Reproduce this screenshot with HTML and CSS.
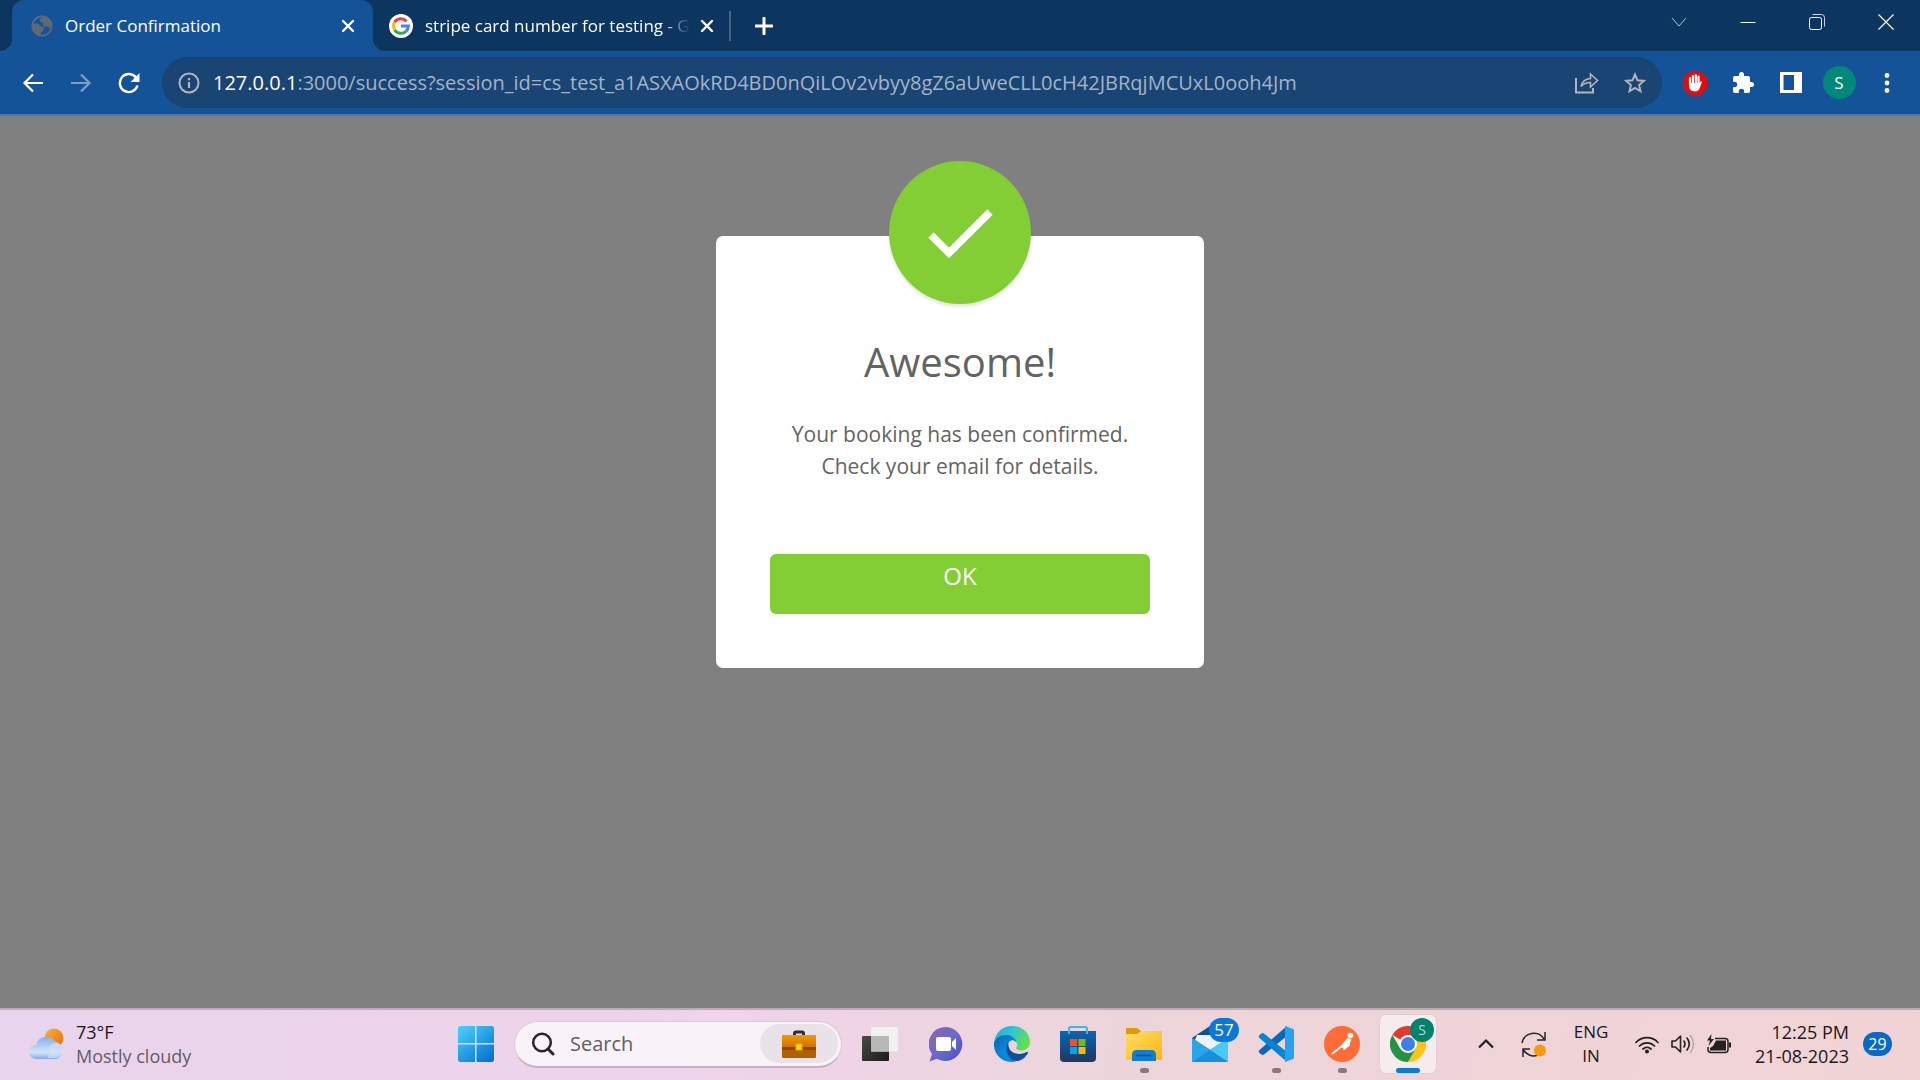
FILE: index.html
```html
<!DOCTYPE html>
<html lang="en">
<head>
<meta charset="utf-8">
<title>Order Confirmation</title>
<link rel="stylesheet" href="styles.css">
</head>
<body>
<div class="desktop">
  <header class="browser">
    <div class="tab-bar">
      <nav class="tabs" aria-label="Tabs">
        <div class="tab tab-active">
          <svg class="favicon" width="22" height="22" viewBox="0 0 22 22"><circle cx="11" cy="11" r="9.700" fill="none" stroke="#606972" stroke-width="1.800"/><path d="M2 8.500h4.500q1.500 0 2 1.500l.8 1.500h2.200q1.500.5 1.500 2v1.500q-2 .5-2.500 2L9 20.500C4 19 .5 15 2 8.500zM12 1.500L9.500 3.500Q8 5 9 6.500l2 1q1.500.5 1 2t1.500 2.200l3-.5 1.500 1.800 2.500-.5C22 7 18 2 12 1.500z" fill="#606972"/></svg>
          <button class="tab-title">Order Confirmation</button>
          <button class="tab-close" aria-label="Close tab"><svg width="14" height="14" viewBox="0 0 14 14"><path d="M2 2l10 10M12 2L2 12" stroke="#fff" stroke-width="2.400" stroke-linecap="round"/></svg></button>
        </div>
        <div class="tab tab-second">
          <svg class="favicon" width="24" height="24" viewBox="0 0 24 24"><circle cx="12" cy="12" r="12" fill="#fff"/><g fill="none" stroke-width="3"><path d="M5.600 8.300A7.400 7.400 0 0 1 17.500 7.200" stroke="#ea4335"/><path d="M5.600 15.700a7.400 7.400 0 0 1 0-7.400" stroke="#fbbc05"/><path d="M17 17.400A7.400 7.400 0 0 1 5.600 15.700" stroke="#34a853"/><path d="M12 12h7.400a7.400 7.400 0 0 1-2.400 5.400" stroke="#4285f4"/></g></svg>
          <button class="tab-title tab-title-fade">stripe card number for testing - G</button>
          <button class="tab-close" aria-label="Close tab"><svg width="14" height="14" viewBox="0 0 14 14"><path d="M2 2l10 10M12 2L2 12" stroke="#fff" stroke-width="2.400" stroke-linecap="round"/></svg></button>
        </div>
        <button class="new-tab" aria-label="New tab"><svg width="18" height="18" viewBox="0 0 18 18"><path d="M9 1v16M1 9h16" stroke="#fff" stroke-width="3" stroke-linecap="round"/></svg></button>
      </nav>
      <div class="window-controls">
        <button aria-label="Search tabs"><svg width="16" height="16" viewBox="0 0 16 16"><path d="M1 4l7 8 7-8" fill="none" stroke="#b6c2cf"/></svg></button>
        <button aria-label="Minimize"><svg width="16" height="16" viewBox="0 0 16 16"><path d="M.5 8.500h15" stroke="#fff"/></svg></button>
        <button aria-label="Restore"><svg width="16" height="16" viewBox="0 0 16 16"><rect x=".5" y="3.500" width="12" height="12" rx="2" fill="none" stroke="#fff"/><path d="M3.500.500h9q3 0 3 3v9" fill="none" stroke="#c9d2dc"/></svg></button>
        <button aria-label="Close window"><svg width="16" height="16" viewBox="0 0 16 16"><path d="M.5.500l15 15M15.500.500l-15 15" stroke="#fff" stroke-width="1.200"/></svg></button>
      </div>
    </div>
    <div class="toolbar">
      <div class="tool-group">
        <button aria-label="Back"><svg width="22" height="22" viewBox="0 0 22 22"><path d="M21 11H3M11 2.500L2.500 11l8.500 8.500" fill="none" stroke="#fff" stroke-width="2.200"/></svg></button>
        <button aria-label="Forward" disabled><svg width="22" height="22" viewBox="0 0 22 22"><path d="M1 11h18M11 2.500l8.500 8.500-8.500 8.500" fill="none" stroke="#7d9fc8" stroke-width="2.200"/></svg></button>
        <button aria-label="Reload"><svg width="22" height="22" viewBox="0 0 22 22"><path d="M18.300 6A9 9 0 1 0 19.500 13.500" fill="none" stroke="#fff" stroke-width="2.400"/><path d="M21.500 1v9h-9z" fill="#fff"/></svg></button>
      </div>
      <form class="omnibox">
        <svg width="22" height="22" viewBox="0 0 22 22"><circle cx="11" cy="11" r="9.500" fill="none" stroke="#b3b5b9" stroke-width="2"/><path d="M11 10v6M11 6v2.200" stroke="#b3b5b9" stroke-width="2.200"/></svg>
        <div class="address">
          <label for="address">127.0.0.1</label>
          <input id="address" type="text" value=":3000/success?session_id=cs_test_a1ASXAOkRD4BD0nQiLOv2vbyy8gZ6aUweCLL0cH42JBRqjMCUxL0ooh4Jm">
        </div>
        <div class="tool-group">
          <button type="button" aria-label="Share"><svg width="24" height="22" viewBox="0 0 24 22"><path d="M1 6v14.500h17V16" fill="none" stroke="#b3b5b9" stroke-width="2"/><path d="M6 14.500C7 9.500 10 7 15.500 6.500V2l7 6.500-7 6.500v-4.500c-4.500 0-7 1-9.500 4z" fill="none" stroke="#b3b5b9" stroke-width="1.600"/></svg></button>
          <button type="button" aria-label="Bookmark this tab"><svg width="22" height="22" viewBox="0 0 22 22"><path d="M11 2.500l2.500 5.800 6.300.6-4.700 4.200 1.400 6.200-5.500-3.300-5.500 3.300 1.400-6.200-4.700-4.200 6.300-.6z" fill="none" stroke="#b3b5b9" stroke-width="2"/></svg></button>
        </div>
      </form>
      <div class="tool-group">
        <button aria-label="Ad blocker"><svg width="24" height="24" viewBox="0 0 24 24"><path d="M7 0h10l7 7v10l-7 7H7l-7-7V7z" fill="#e60b0b"/><path d="M7 7v7M9.900 5v8M12.800 4v9M15.500 5.500V14" stroke="#fff" stroke-width="2.200" stroke-linecap="round"/><path d="M6 12h10.600l1.200-2q1.600-.3 1 1.500l-2.300 6q-1.200 3-4.500 3Q6 20.500 6 14z" fill="#fff"/></svg></button>
        <button aria-label="Extensions"><svg width="24" height="24" viewBox="0 0 24 24"><path d="M20.500 11H19V7a2 2 0 0 0-2-2h-4V3.500a2.500 2.500 0 0 0-5 0V5H4a2 2 0 0 0-2 2v3.800h1.500a2.700 2.700 0 0 1 0 5.400H2V20a2 2 0 0 0 2 2h3.800v-1.500a2.700 2.700 0 0 1 5.400 0V22H17a2 2 0 0 0 2-2v-4h1.500a2.500 2.500 0 0 0 0-5z" fill="#fff"/></svg></button>
        <button aria-label="Side panel"><svg width="22" height="21" viewBox="0 0 22 21"><path fill-rule="evenodd" d="M0 0h22v21H0zM3.500 3v15H14V3z" fill="#fff"/></svg></button>
        <button aria-label="Profile"><span class="avatar">S</span></button>
        <button aria-label="Menu"><svg width="6" height="20" viewBox="0 0 6 20"><g fill="#fff"><circle cx="3" cy="2.500" r="2.400"/><circle cx="3" cy="10" r="2.400"/><circle cx="3" cy="17.500" r="2.400"/></g></svg></button>
      </div>
    </div>
  </header>

  <main class="page">
    <section class="modal" role="dialog" aria-labelledby="modal-title">
      <div class="modal-icon"><svg width="66" height="50" viewBox="0 0 66 50"><path d="M4 27L22 45 63 4" fill="none" stroke="#fff" stroke-width="7.500"/></svg></div>
      <h1 id="modal-title">Awesome!</h1>
      <p>Your booking has been confirmed. Check your email for details.</p>
      <button class="ok">OK</button>
    </section>
  </main>

  <footer class="taskbar">
    <button class="weather">
      <svg width="38" height="32" viewBox="0 0 38 32">
        <defs><linearGradient id="sun" x2="1" y2="1"><stop stop-color="#f2b53a"/><stop offset="1" stop-color="#f06a0a"/></linearGradient><linearGradient id="cloud" x2="0" y2="1"><stop stop-color="#86aeee"/><stop offset=".7" stop-color="#d3e4f8"/><stop offset="1" stop-color="#83a9ee"/></linearGradient></defs>
        <circle cx="26" cy="10" r="9.500" fill="url(#sun)"/><path d="M8 31a7 7 0 0 1 0-14 10.500 10.500 0 0 1 19-3.500 9 9 0 0 1 1.500 17.500z" fill="url(#cloud)"/><path d="M21 19q3-5 9-4a8 8 0 0 1-2 15h-8z" fill="#cfe0f8" opacity=".7"/>
      </svg>
      <span class="lines"><span>73°F</span><span class="muted">Mostly cloudy</span></span>
    </button>

    <nav class="apps" aria-label="Taskbar">
      <button class="app" aria-label="Start"><svg width="36" height="36" viewBox="0 0 36 36"><defs><linearGradient id="win" gradientUnits="userSpaceOnUse" x1="0" y1="0" x2="30" y2="36"><stop stop-color="#4ed3fb"/><stop offset="1" stop-color="#0573d3"/></linearGradient></defs><path d="M1.500 0H17v17H0V1.500zM18.500 0h16L36 1.500V17H18.500zM0 18.500h17V36H1.500L0 34.500zM18.500 18.500H36v16L34.500 36h-16z" fill="url(#win)"/></svg></button>
      <div class="search">
        <svg width="24" height="24" viewBox="0 0 24 24"><circle cx="11" cy="10.500" r="8.800" fill="none" stroke="#272727" stroke-width="2.500"/><path d="M17 17l5 5" stroke="#272727" stroke-width="3" stroke-linecap="round"/></svg>
        <input type="text" placeholder="Search" aria-label="Search">
        <button class="highlight" aria-label="Search highlights"><svg width="34" height="28" viewBox="0 0 34 28"><defs><linearGradient id="case" x2="0" y2="1"><stop stop-color="#f39a05"/><stop offset="1" stop-color="#cf7200"/></linearGradient></defs><path d="M12.500 5V3.500Q12.500 2 14 2h6q1.500 0 1.500 1.500V5" fill="none" stroke="#2c2f37" stroke-width="3"/><rect y="5" width="34" height="23" rx="1.500" fill="#b06000"/><path d="M0 6q0-1 1-1h32q1 0 1 1v11H0z" fill="url(#case)"/><rect y="17" width="34" height="3" fill="#8b4700"/><rect x="14" y="14" width="6" height="6" fill="#ffd321" stroke="#e5ac00"/></svg></button>
      </div>
      <button class="app" aria-label="Task view"><svg width="36" height="34" viewBox="0 0 36 34"><defs><linearGradient id="dark" x2="1" y2="1"><stop stop-color="#4a4a48"/><stop offset="1" stop-color="#1b1b1b"/></linearGradient></defs><rect y="9" width="27" height="25" rx="1" fill="url(#dark)"/><rect x="9" width="27" height="24.500" rx="1" fill="#f1f1f1"/><path d="M9 9h18v15.500H9z" fill="#b8b8b7"/></svg></button>
      <button class="app" aria-label="Chat"><svg width="34" height="35" viewBox="0 0 34 35"><defs><linearGradient id="chat" x1="0" y1="0" x2="1" y2="1"><stop stop-color="#8c65a8"/><stop offset=".5" stop-color="#6a6bc9"/><stop offset="1" stop-color="#4a4fc0"/></linearGradient></defs><path d="M17 0a17 17 0 1 1-9 31.800L.500 34.500 3 27A17 17 0 0 1 17 0z" fill="url(#chat)"/><rect x="7" y="10" width="15" height="14" rx="2" fill="#fff"/><path d="M23 15l4-4v12l-4-4z" fill="#fff"/></svg></button>
      <button class="app" aria-label="Edge"><svg width="36" height="36" viewBox="0 0 36 36"><defs><linearGradient id="edge1" x2="1" y2=".4"><stop stop-color="#1fa6dc"/><stop offset=".5" stop-color="#30c4d6"/><stop offset="1" stop-color="#63df4f"/></linearGradient><linearGradient id="edge2" x2="1" y2="1"><stop stop-color="#0c64ae"/><stop offset=".5" stop-color="#0a85da"/></linearGradient></defs><path d="M0 17C1 7 8 0 18 0c11 0 18 8 18 16 0 6-5 9-10 8.500-3.500-.5-4.500-2-3.500-3.500 2-3 0-7-5-7z" fill="url(#edge1)"/><path d="M0 17C2 11 8 8.500 13 9c6 .5 9.500 4.500 9.500 8-1-3-5-4-7.500-1C10 22 14 34 23 35 10 39-1 29 0 17z" fill="url(#edge2)"/><path d="M14.500 16C9 23 15 36 24 35c5-1 8-4.500 10-8 .5-1-.5-1.500-1.300-1C24 30.500 13 27 14.500 16z" fill="#114f9a"/></svg></button>
      <button class="app" aria-label="Microsoft Store"><svg width="36" height="36" viewBox="0 0 36 36"><defs><linearGradient id="store" x2="0" y2="1"><stop stop-color="#0a66b3"/><stop offset="1" stop-color="#20375f"/></linearGradient></defs><path d="M0 5h36v27q0 4-4 4H4q-4 0-4-4z" fill="url(#store)"/><path d="M9 8V3q0-2 2-2h14q2 0 2 2v5" fill="none" stroke="#35b7ef" stroke-width="2"/><path d="M10 13h7v7h-7z" fill="#f25022"/><path d="M18.500 13h7v7h-7z" fill="#7fba00"/><path d="M10 21h7v7h-7z" fill="#00a4ef"/><path d="M18.500 21h7v7h-7z" fill="#ffb900"/></svg></button>
      <button class="app running" aria-label="File Explorer"><svg width="36" height="33" viewBox="0 0 36 33"><defs><linearGradient id="folder" x2="1" y2="1"><stop stop-color="#ffdc6b"/><stop offset="1" stop-color="#fdb70c"/></linearGradient></defs><path d="M0 1q0-1 1-1h10l4 3h20v5H0z" fill="#dd9c04"/><path d="M0 6h11l4-3h20q1 0 1 1v28H0z" fill="url(#folder)"/><path d="M6 33v-6q0-5 5-5h14q5 0 5 5v6z" fill="#0f7cd6"/><path d="M10 27.500h15" stroke="#0a4f96" stroke-width="1.500"/></svg></button>
      <button class="app" aria-label="Mail"><svg width="36" height="36" viewBox="0 0 36 36"><path d="M0 12L18 0l18 12v8H0z" fill="#104f96"/><path d="M5 9h27v12l-14 5L3 14z" fill="#eef3f7"/><path d="M0 12l36 23H0z" fill="#2ba5e8"/><path d="M36 12v23L18 23.500z" fill="#47c9f5"/><path d="M0 36V12l36 24z" fill="#2ba5e8"/><path d="M0 36l18-12 18 12z" fill="#1590df"/></svg><span class="badge">57</span></button>
      <button class="app running" aria-label="Visual Studio Code"><svg width="36" height="36" viewBox="0 0 36 36"><path d="M2 27.500l2 1.200q1 .5 2-.3L29 10V0L1.500 24Q0 26 2 27.500z" fill="#0969b5"/><path d="M2 8.500l2-1.200q1-.5 2 .3L29 26v10L1.500 12Q0 10 2 8.500z" fill="#0785d0"/><path d="M27 0l8 3q1 .5 1 2v26q0 1.500-1 2l-8 3z" fill="#27a2f0"/></svg></button>
      <button class="app running" aria-label="Postman"><svg width="36" height="36" viewBox="0 0 36 36"><circle cx="18" cy="18" r="18" fill="#ff6c37"/><circle cx="26.500" cy="9.500" r="2.800" fill="#fff"/><path d="M23.500 12l4 1.500-3.500 6-4 2.500-4-1z" fill="#fff"/><path d="M18 20l-9.500 7.500M25.500 14l-.5 5-5 4" fill="none" stroke="#fff" stroke-width="1.800" stroke-linecap="round"/></svg></button>
      <button class="app current" aria-label="Google Chrome"><svg width="36" height="36" viewBox="0 0 36 36"><path d="M18 18L2.400 9A18 18 0 0 1 33.600 9z" fill="#e23a2e"/><path d="M18 18V9h15.600A18 18 0 0 1 18 36l7.800-13.500z" fill="#fcc216"/><path d="M10.200 22.500L2.400 9A18 18 0 0 0 18 36l7.800-13.500z" fill="#239345"/><circle cx="18" cy="18" r="9" fill="#fff"/><circle cx="18" cy="18" r="7" fill="#3f7de8"/></svg><span class="badge badge-profile">S</span></button>
    </nav>

    <div class="tray">
      <button aria-label="Show hidden icons"><svg width="18" height="18" viewBox="0 0 18 18"><path d="M2 12.500L9 5.500l7 7" fill="none" stroke="#272222" stroke-width="2.200"/></svg></button>
      <button class="tray-sync" aria-label="Windows Update"><svg width="26" height="26" viewBox="0 0 26 26"><g fill="none" stroke="#2a2424" stroke-width="1.500"><path d="M1 12A12 12 0 0 1 23 8M24 1v8h-8"/><path d="M16 24.500A12 12 0 0 1 2.500 19M2 26v-8h7"/></g><circle cx="19" cy="19.500" r="6" fill="#fb980b"/></svg></button>
      <button class="tray-language lines"><span>ENG</span><span>IN</span></button>
      <button class="tray-status" aria-label="Network, sound and battery">
        <svg width="24" height="20" viewBox="0 0 24 20"><g fill="none" stroke="#222" stroke-width="1.700" stroke-linecap="round"><path d="M1 8.500a15 15 0 0 1 22 0M4.500 12a10.500 10.500 0 0 1 15 0M8 15a6 6 0 0 1 8 0"/></g><circle cx="12" cy="17.500" r="2" fill="#222"/></svg>
        <svg width="24" height="20" viewBox="0 0 24 20"><g fill="none" stroke="#222" stroke-width="1.600" stroke-linejoin="round" stroke-linecap="round"><path d="M1 7h3.500L9.500 2v16l-5-5H1zM13 7q2 3 0 6M16 4q4.500 6 0 12"/><path d="M19.500 1.500q6 8.500 0 17" stroke="#bfa9ab"/></g></svg>
        <svg width="24" height="20" viewBox="0 0 24 20"><path d="M8 4.500h10q3 0 3 3v8q0 3-3 3H4q-3 0-3-3V13" fill="none" stroke="#222" stroke-width="1.500"/><path d="M9 6.500h10v10H3V14l3-2z" fill="#222"/><path d="M22 8.500h2v5h-2zM4.500 0L0 6.500h3L1.500 12 7 5H4z" fill="#222"/></svg>
      </button>
      <button class="tray-clock lines"><span>12:25 PM</span><span>21-08-2023</span></button>
      <button class="tray-count" aria-label="29 notifications"><span>29</span></button>
    </div>
  </footer>
</div>
</body>
</html>
```
FILE: styles.css
```css
* { box-sizing: border-box; }

body {
  margin: 0;
  font-family: "Open Sans", "Noto Sans", sans-serif;
  font-size: 17px;
}

button, input {
  margin: 0;
  padding: 0;
  border: 0;
  background: none;
  color: inherit;
  font: inherit;
}

button {
  display: flex;
  align-items: center;
  justify-content: center;
  position: relative;
}

svg { display: block; flex: none; }

.desktop {
  display: flex;
  flex-direction: column;
  min-height: 100vh;
}

/* Browser window */
.browser {
  background: #155399;
  border-bottom: 2px solid #4a7bb5;
  color: #fff;
}

.tab-bar {
  display: flex;
  justify-content: space-between;
  height: 51px;
  background: #0c3560;
}

.tabs {
  display: flex;
  align-items: center;
  padding-left: 12px;
}

.tab {
  display: flex;
  align-items: center;
  height: 51px;
  position: relative;
}

.tab-active {
  width: 361px;
  padding: 0 18px 0 19px;
  background: #155399;
  border-radius: 12px 12px 0 0;
}

.tab-active::before,
.tab-active::after {
  content: "";
  position: absolute;
  bottom: 0;
  width: 12px;
  height: 12px;
}

.tab-active::before {
  right: 100%;
  background: radial-gradient(circle at 0 0, #0c3560 12px, #155399 12px);
}

.tab-active::after {
  left: 100%;
  background: radial-gradient(circle at 100% 0, #0c3560 12px, #155399 12px);
}

.tab-second {
  width: 358px;
  padding: 0 17px 0 16px;
}

.tab-second::after {
  content: "";
  position: absolute;
  right: 0;
  width: 2px;
  height: 30px;
  background: #496685;
}

.tab-title {
  flex: 1;
  justify-content: flex-start;
  min-width: 0;
  margin-left: 12px;
  white-space: nowrap;
}

.tab-title-fade {
  -webkit-mask-image: linear-gradient(90deg, #000 90%, transparent);
  mask-image: linear-gradient(90deg, #000 90%, transparent);
}

.tab-close { margin-left: 10px; }
.new-tab { margin-left: 24px; }

.window-controls { display: flex; }

.window-controls button {
  width: 69px;
  height: 43px;
}

.toolbar {
  display: flex;
  align-items: center;
  gap: 9px;
  padding: 6px 9px;
}

.tool-group { display: flex; }

.tool-group button {
  width: 48px;
  height: 50px;
}

.omnibox {
  flex: 1;
  display: flex;
  align-items: center;
  height: 51px;
  padding: 0 3px 0 16px;
  border-radius: 26px;
  background: #1a4473;
}

.address {
  flex: 1;
  display: flex;
  margin-left: 13px;
  font-size: 20px;
  line-height: 28px;
}

.address input {
  flex: 1;
  color: #a3b4c7;
}

.avatar {
  width: 33px;
  height: 33px;
  border-radius: 50%;
  background: #00897b;
  line-height: 33px;
}

/* Order confirmation page */
.page {
  flex: 1;
  background: #808080;
}

.modal {
  display: flex;
  flex-direction: column;
  align-items: center;
  width: 488px;
  margin: 120px auto 0;
  padding: 0 54px 54px;
  border-radius: 7px;
  background: #fff;
  color: #636363;
  text-align: center;
}

.modal-icon {
  display: flex;
  align-items: center;
  justify-content: center;
  width: 142px;
  height: 143px;
  margin-top: -75px;
  border-radius: 50%;
  background: #82ce34;
  box-shadow: 0 3px 3px rgba(0, 0, 0, 0.1);
}

.modal h1 {
  margin: 30px 0 0;
  font-size: 40px;
  font-weight: 400;
  line-height: 56px;
}

.modal p {
  width: 360px;
  margin: 28px 0 0;
  font-size: 21px;
  line-height: 32px;
}

.ok {
  align-self: stretch;
  align-items: flex-start;
  height: 60px;
  margin-top: 72px;
  padding-top: 6px;
  border-radius: 6px;
  background: #82ce34;
  color: #fff;
  font-size: 24px;
  font-weight: 500;
  line-height: 32px;
}

/* Taskbar */
.taskbar {
  display: grid;
  grid-template-columns: 1fr auto 1fr;
  align-items: center;
  height: 72px;
  padding-bottom: 2px;
  border-top: 2px solid #bcaab9;
  background: linear-gradient(100deg, #e8d4ed, #efd4ea 38%, #ecd5da 58%, #f1d3d5);
  color: #1b1718;
}

.lines {
  display: flex;
  flex-direction: column;
  line-height: 24px;
}

.muted { color: #655c67; }

.weather {
  justify-self: start;
  gap: 10px;
  padding-left: 28px;
  font-size: 18px;
}

.weather .lines { align-items: flex-start; }

.apps {
  display: flex;
  align-items: center;
  gap: 10px;
  padding-right: 36px;
}

.app {
  width: 56px;
  height: 58px;
  border-radius: 6px;
}

.running::after,
.current::after {
  content: "";
  position: absolute;
  bottom: 0;
  width: 9px;
  height: 5px;
  border-radius: 3px;
  background: #87797d;
}

.current {
  background: #f7eced;
  box-shadow: 0 0 0 1px #e6cfd2;
}

.current::after {
  width: 24px;
  background: #0a7ad9;
}

.search {
  display: flex;
  align-items: center;
  width: 328px;
  height: 47px;
  padding: 0 3px 0 16px;
  border: 1px solid #dfc7db;
  border-bottom: 2px solid #c7afc4;
  border-radius: 24px;
  background: #f9f2f9;
}

.search input {
  flex: 1;
  min-width: 0;
  margin-left: 15px;
  font-size: 20px;
}

.search input::placeholder { color: #625d63; opacity: 1; }

.highlight {
  width: 78px;
  height: 39px;
  border-radius: 20px;
  background: #e9e3e9;
}

.badge {
  position: absolute;
  top: 3px;
  right: -1px;
  width: 30px;
  height: 24px;
  border-radius: 12px;
  background: #0a78d6;
  color: #fff;
  line-height: 24px;
}

.badge-profile {
  right: 2px;
  width: 24px;
  background: #05816f;
  color: #b5dad3;
  font-size: 14px;
}

.tray {
  display: flex;
  align-items: center;
  justify-content: flex-end;
  padding-right: 28px;
}

.tray > button { height: 60px; }
.tray-sync { margin-left: 26px; }
.tray-language { width: 88px; }
.tray-status { gap: 12px; }

.tray-clock {
  width: 118px;
  align-items: flex-end;
  font-size: 18px;
}

.tray-count span {
  width: 29px;
  height: 24px;
  margin-left: 14px;
  border-radius: 12px;
  background: #0869c7;
  color: #fff;
  font-size: 16px;
  line-height: 24px;
}
```
